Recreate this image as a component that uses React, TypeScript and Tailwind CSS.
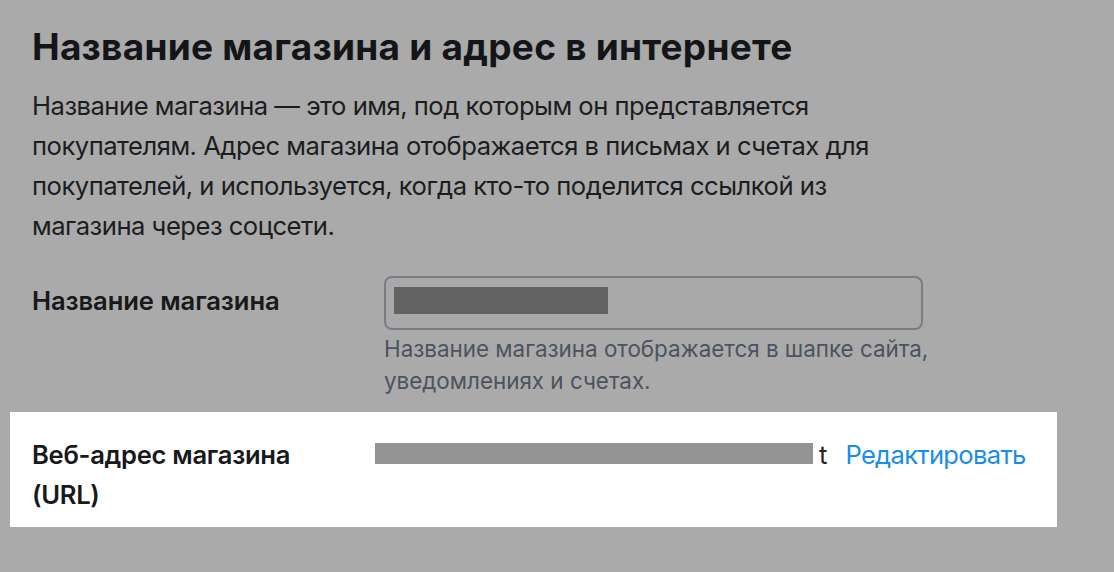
import React from "react";

export default function App() {
  return (
    <div className="w-[1114px] h-[572px] overflow-hidden bg-[#aaaaaa] font-['Inter',sans-serif] text-[#17191c]">
      <div className="pl-[32px] pt-[25px]">
        <h1 className="text-[37px] leading-[44px] font-bold text-[#131518] whitespace-nowrap tracking-[0.25px]">
          Название магазина и адрес в интернете
        </h1>
        <p className="mt-[17px] text-[25.6px] leading-[40px] text-[#1b1d20] whitespace-nowrap tracking-[-0.5px]">
          Название магазина — это имя, под которым он представляется
          <br />
          покупателям. Адрес магазина отображается в письмах и счетах для
          <br />
          покупателей, и используется, когда кто-то поделится ссылкой из
          <br />
          магазина через соцсети.
        </p>

        <div className="mt-[30px] flex">
          <div className="w-[352px] pt-[5px] text-[25.6px] leading-[40px] font-semibold whitespace-nowrap tracking-[-0.1px]">
            Название магазина
          </div>
          <div className="flex flex-col">
            <div className="w-[539px] h-[54px] rounded-[8px] border-2 border-[#787d87] bg-[#a9a9a9] flex items-start pl-[8px] pt-[9px]">
              <div className="w-[214px] h-[27px] bg-[#636363]" />
            </div>
            <div className="mt-[3px] text-[22.4px] leading-[32px] text-[#4b5361] whitespace-nowrap">
              Название магазина отображается в шапке сайта,
              <br />
              уведомлениях и счетах.
            </div>
          </div>
        </div>
      </div>

      <div className="mt-[15px] ml-[10px] w-[1047px] bg-white pl-[22px] pt-[23px] pb-[12px] flex items-start">
        <div className="w-[343px] text-[25.6px] leading-[40px] font-semibold whitespace-nowrap tracking-[-0.3px]">
          Веб-адрес магазина
          <br />
          (URL)
        </div>
        <div className="flex items-center h-[40px] text-[25.6px] leading-[40px] whitespace-nowrap">
          <div className="w-[438px] h-[21px] bg-[#939393] -mt-[3px]" />
          <span className="ml-[6px] text-[#222326]">t</span>
          <a href="#" className="ml-[18px] text-[#1a8de6] tracking-[-0.7px]">
            Редактировать
          </a>
        </div>
      </div>
    </div>
  );
}
